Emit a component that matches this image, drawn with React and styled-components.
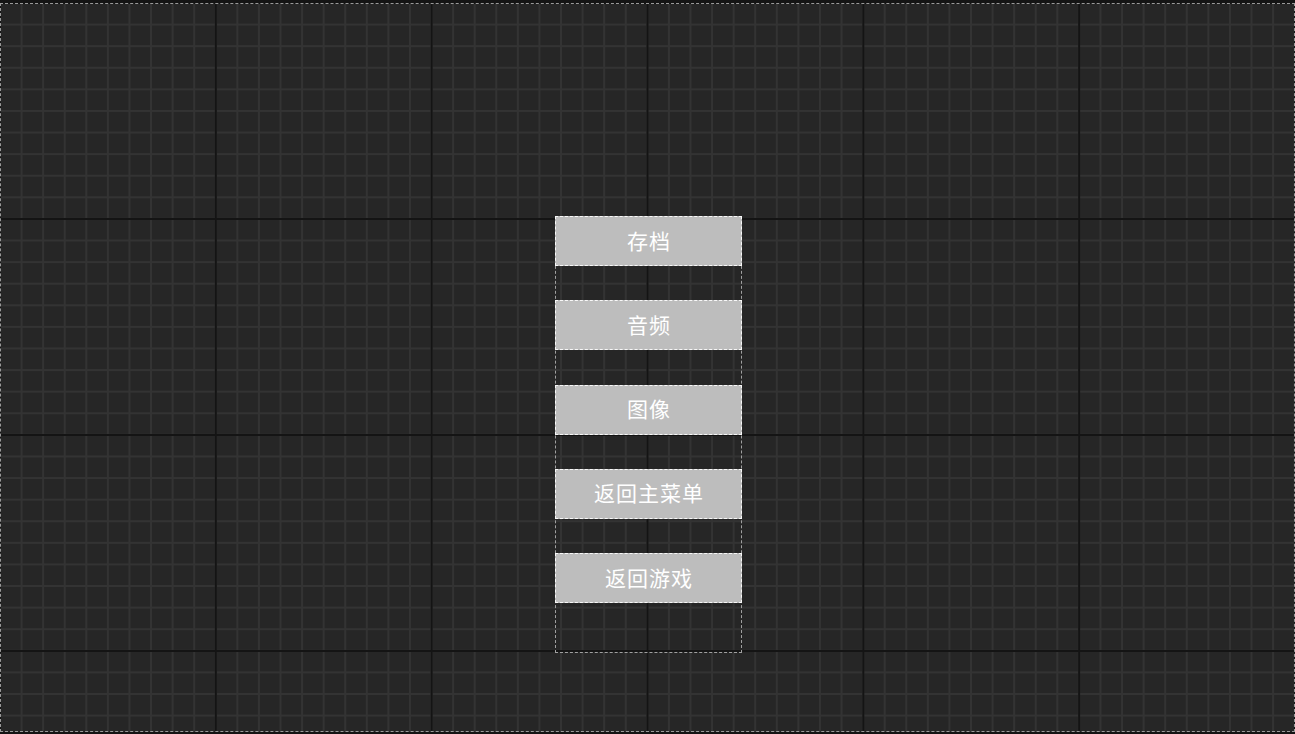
import React from "react";
import styled, { createGlobalStyle } from "styled-components";

const Global = createGlobalStyle`
  html, body {
    margin: 0;
    padding: 0;
    background: #141414;
    overflow: hidden;
  }
  * { box-sizing: border-box; }
`;

const Stage = styled.div`
  margin-top: 3px;
  width: 1295px;
  height: 729px;
  border: 1px dashed #9a9a9a;
  background-color: #262626;
  background-image:
    linear-gradient(to right, #141414 0 2px, transparent 2px),
    linear-gradient(to bottom, #141414 0 2px, transparent 2px),
    linear-gradient(to right, #333333 0 2px, transparent 2px),
    linear-gradient(to bottom, #333333 0 2px, transparent 2px);
  background-size:
    215.83px 216px,
    215.83px 216px,
    21.583px 21.6px,
    21.583px 21.6px;
  background-position: -2px -2px;
  display: flex;
  justify-content: center;
  align-items: flex-start;
  padding-top: 212px;
  font-family: "Noto Sans CJK SC", "Noto Sans", sans-serif;
`;

const Menu = styled.div`
  width: 187px;
  margin-left: 2px;
  border: 1px dashed #a0a0a0;
  display: flex;
  flex-direction: column;
  gap: 35.25px;
  padding-bottom: 49px;
`;

const MenuButton = styled.div`
  height: 50px;
  background: #bdbdbd;
  border: 1px dashed rgba(255, 255, 255, 0.9);
  margin: -1px -1px 0 -1px;
  display: flex;
  align-items: center;
  justify-content: center;
  color: #ffffff;
  font-size: 21px;
  line-height: 1;
  letter-spacing: 1px;
  padding: 0 0 2px 1px;
  cursor: pointer;
  user-select: none;
`;

const items = ["存档", "音频", "图像", "返回主菜单", "返回游戏"];

export default function App() {
  return (
    <>
      <Global />
      <Stage>
        <Menu>
          {items.map((t) => (
            <MenuButton key={t}>{t}</MenuButton>
          ))}
        </Menu>
      </Stage>
    </>
  );
}
